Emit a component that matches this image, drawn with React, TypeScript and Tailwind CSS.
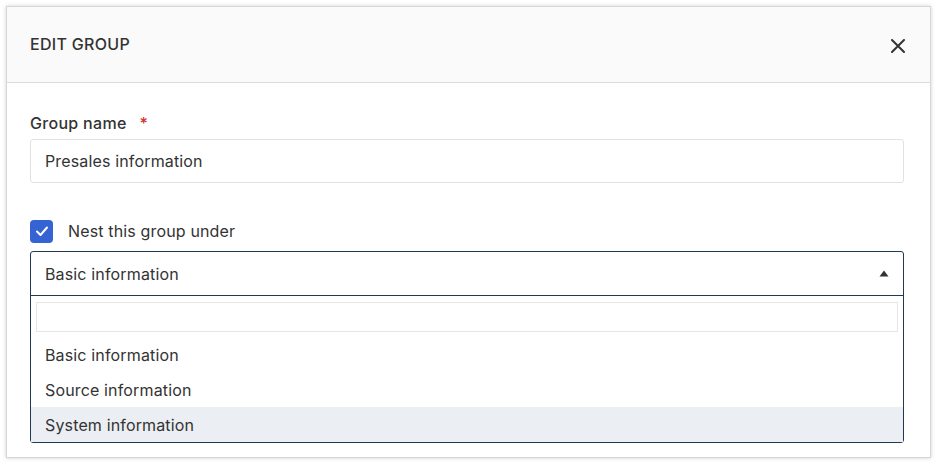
import React from "react";

export default function App() {
  return (
    <div className="w-[938px] h-[464px] bg-white pt-[6px] pl-[6px]" style={{ fontFamily: "Inter, 'Noto Sans', sans-serif" }}>
      <div className="w-[925px] h-[452px] bg-white border border-[#d6d6d6] shadow-[0_0_4px_rgba(0,0,0,0.18)] flex flex-col">
        <div className="h-[76px] shrink-0 bg-[#fafafa] border-b border-[#d9dde2] flex items-center justify-between pl-[23px] pr-[25px]">
          <span className="text-[16px] font-medium text-[#333] tracking-[0.3px] mt-[-1px]">EDIT GROUP</span>
          <svg width="14" height="14" viewBox="0 0 14 14" className="mt-[2px]">
            <path d="M1 1L13 13M13 1L1 13" stroke="#333" strokeWidth="2" strokeLinecap="round" />
          </svg>
        </div>
        <div className="pl-[23px] pr-[26px] pt-[31px] flex flex-col">
          <div className="flex items-center h-[18px] text-[16px] font-medium text-[#333] tracking-[0.3px]">
            Group name<span className="text-[#d0312d] ml-[13px]">*</span>
          </div>
          <div className="mt-[7px] h-[44px] border border-[#e2e2e2] rounded-[3px] flex items-center px-[14px] text-[16px] text-[#333] tracking-[0.15px]">
            Presales information
          </div>
          <div className="mt-[36px] flex items-center h-[24px]">
            <div className="w-[23px] h-[23px] rounded-[4px] bg-[#3563d4] flex items-center justify-center">
              <svg width="16" height="16" viewBox="0 0 16 16">
                <path d="M3 8.5L6.5 12L13 4.5" stroke="white" strokeWidth="2" fill="none" strokeLinecap="round" strokeLinejoin="round" />
              </svg>
            </div>
            <span className="ml-[15px] text-[16px] text-[#333] tracking-[0.15px]">Nest this group under</span>
          </div>
          <div className="mt-[8px] border border-[#1f3a52] rounded-[3px] flex flex-col text-[16px] text-[#333] tracking-[0.15px]">
            <div className="h-[44px] border-b border-[#1f3a52] flex items-center justify-between pl-[14px] pr-[14px]">
              <span>Basic information</span>
              <svg width="10" height="7" viewBox="0 0 10 7">
                <path d="M5 0.5L9.5 6.5H0.5Z" fill="#333" />
              </svg>
            </div>
            <div className="pt-[6px] pb-[6px] px-[5px]">
              <div className="h-[30px] border border-[#e6e6e6]" />
            </div>
            <div className="h-[34px] flex items-center pl-[14px]">Basic information</div>
            <div className="h-[35px] flex items-center pl-[14px]">Source information</div>
            <div className="h-[35px] flex items-center pl-[14px] bg-[#ebeef2]">System information</div>
          </div>
        </div>
      </div>
    </div>
  );
}
